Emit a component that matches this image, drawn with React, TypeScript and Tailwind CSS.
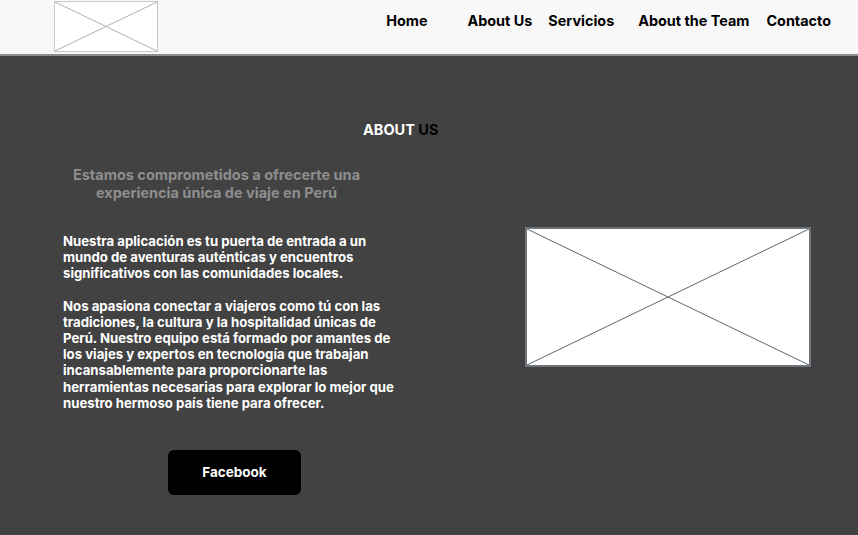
import React from "react";

function Placeholder({ className, stroke }: { className: string; stroke: string }) {
  return (
    <div className={className}>
      <svg width="100%" height="100%" viewBox="0 0 100 100" preserveAspectRatio="none" className="block">
        <line x1="0" y1="0" x2="100" y2="100" stroke={stroke} strokeWidth="1" vectorEffect="non-scaling-stroke" />
        <line x1="100" y1="0" x2="0" y2="100" stroke={stroke} strokeWidth="1" vectorEffect="non-scaling-stroke" />
      </svg>
    </div>
  );
}

export default function App() {
  return (
    <div className="w-[858px] h-[535px] overflow-hidden bg-[#424242] font-['Inter',sans-serif] font-bold">
      <header className="h-[56px] bg-[#f8f8f8] border-b-2 border-[#8c8c8c] flex items-start">
        <Placeholder className="ml-[54px] mt-[1px] w-[104px] h-[51px] bg-white border border-[#c8c8c8]" stroke="#b0b0b0" />
        <nav className="ml-auto mr-[27px] mt-[11px] flex text-[14.4px] leading-[20px] text-black">
          <span className="mr-[40px]">Home</span>
          <span className="mr-[16px]">About Us</span>
          <span className="mr-[24px]">Servicios</span>
          <span className="mr-[17px]">About the Team</span>
          <span>Contacto</span>
        </nav>
      </header>
      <main className="pt-[65px]">
        <h1 className="pl-[363px] text-[14.5px] leading-[18px] text-white">
          ABOUT <span className="text-black">US</span>
        </h1>
        <div className="flex mt-[27px]">
          <div className="w-[462px] pl-[63px]">
            <p className="w-[307px] text-center text-[14.5px] leading-[18px] text-[#8e8e8e]">
              Estamos comprometidos a ofrecerte una experiencia única de viaje en Perú
            </p>
            <div className="mt-[31px] w-[340px] text-[13.2px] leading-[16.2px] text-white">
              <p>
                Nuestra aplicación es tu puerta de entrada a un mundo de aventuras auténticas y encuentros significativos con las comunidades locales.
              </p>
              <p className="mt-[16px]">
                Nos apasiona conectar a viajeros como tú con las tradiciones, la cultura y la hospitalidad únicas de Perú. Nuestro equipo está formado por amantes de los viajes y expertos en tecnología que trabajan incansablemente para proporcionarte las herramientas necesarias para explorar lo mejor que nuestro hermoso país tiene para ofrecer.
              </p>
            </div>
            <button className="mt-[39px] ml-[105px] w-[133px] h-[45px] rounded-[6px] bg-black text-white text-[13.5px] font-bold">
              Facebook
            </button>
          </div>
          <div className="pl-[63px] pt-[61px]">
            <Placeholder className="w-[286px] h-[140px] bg-white border-2 border-[#6e747c]" stroke="#5f6670" />
          </div>
        </div>
      </main>
    </div>
  );
}
